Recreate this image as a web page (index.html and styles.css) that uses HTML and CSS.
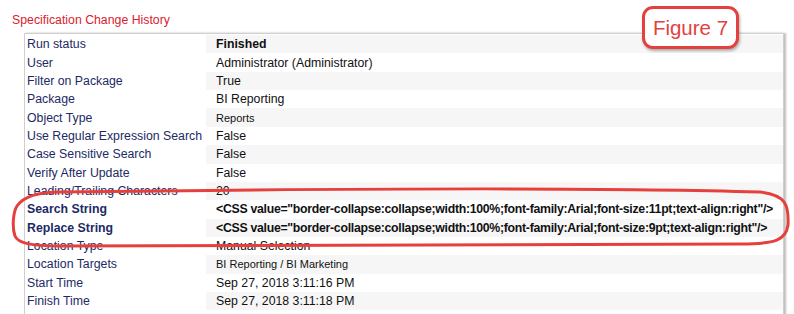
FILE: index.html
```html
<!DOCTYPE html>
<html>
<head>
<meta charset="utf-8">
<link rel="stylesheet" href="styles.css">
</head>
<body>
<div class="page">
  <div class="title">Specification Change History</div>
  <div class="box">
    <table class="props">
      <tr><td class="k">Run status</td><td class="v b">Finished</td></tr>
      <tr><td class="k">User</td><td class="v">Administrator (Administrator)</td></tr>
      <tr><td class="k">Filter on Package</td><td class="v">True</td></tr>
      <tr><td class="k">Package</td><td class="v">BI Reporting</td></tr>
      <tr><td class="k">Object Type</td><td class="v sm">Reports</td></tr>
      <tr><td class="k">Use Regular Expression Search</td><td class="v">False</td></tr>
      <tr><td class="k">Case Sensitive Search</td><td class="v">False</td></tr>
      <tr><td class="k">Verify After Update</td><td class="v">False</td></tr>
      <tr><td class="k">Leading/Trailing Characters</td><td class="v">20</td></tr>
      <tr><td class="k b">Search String</td><td class="v b code">&lt;CSS value="border-collapse:collapse;width:100%;font-family:Arial;font-size:11pt;text-align:right"/&gt;</td></tr>
      <tr><td class="k b">Replace String</td><td class="v b code">&lt;CSS value="border-collapse:collapse;width:100%;font-family:Arial;font-size:9pt;text-align:right"/&gt;</td></tr>
      <tr><td class="k">Location Type</td><td class="v">Manual Selection</td></tr>
      <tr><td class="k">Location Targets</td><td class="v sm">BI Reporting / BI Marketing</td></tr>
      <tr><td class="k">Start Time</td><td class="v">Sep 27, 2018 3:11:16 PM</td></tr>
      <tr><td class="k">Finish Time</td><td class="v">Sep 27, 2018 3:11:18 PM</td></tr>
    </table>
  </div>
  <div class="figure">Figure 7</div>
  <svg class="ring" width="794" height="314" viewBox="0 0 794 314">
    <path d="M 60 192 C 300 189, 600 187, 760 192 C 786 195, 789 205, 788 225 C 786 240, 776 244, 740 244 L 60 246 C 30 246, 18 243, 15 236 C 12 228, 13 212, 17 206 C 24 196, 40 192, 60 192 Z" fill="none" stroke="#e6403c" stroke-width="3"/>
  </svg>
</div>
</body>
</html>
```
FILE: styles.css
```css
html, body {
  margin: 0;
  padding: 0;
  background: #fff;
}
.page {
  position: relative;
  width: 794px;
  height: 314px;
  overflow: hidden;
  font-family: "Liberation Sans", Arial, sans-serif;
}
.title {
  color: #d9222f;
  font-size: 12.3px;
  padding: 13px 0 0 12px;
  height: 20px;
  line-height: 15px;
}
.box {
  margin-left: 24px;
  width: 758px;
  border: 1px solid #cfcfcf;
  border-bottom: none;
  box-shadow: 2px 0 2px #bdbdbd;
  height: 300px;
  overflow: hidden;
}
.props {
  border-collapse: collapse;
  width: 100%;
  table-layout: fixed;
  margin-top: 1px;
}
.props td {
  height: 18.36px;
  padding: 0;
  font-size: 12.3px;
  line-height: 14px;
  white-space: nowrap;
}
.props .k {
  width: 179px;
  padding-left: 2px;
  color: #1c2a66;
}
.props .v {
  padding-left: 10px;
  color: #111;
}
.props tr:nth-child(odd) .v {
  background: #f6f6f6;
}
.props .b {
  font-weight: bold;
}
.props .code {
  letter-spacing: -0.29px;
}
.props .sm {
  font-size: 11px;
}
.figure {
  position: absolute;
  left: 642px;
  top: 6px;
  width: 91px;
  height: 37px;
  border: 3px solid #e4403e;
  border-radius: 11px;
  background: #fff;
  color: #e4403e;
  font-size: 20.5px;
  line-height: 37px;
  text-align: center;
  box-shadow: 1px 2px 3px rgba(0,0,0,0.3);
}
.ring {
  position: absolute;
  left: 0;
  top: 0;
  pointer-events: none;
}
```
